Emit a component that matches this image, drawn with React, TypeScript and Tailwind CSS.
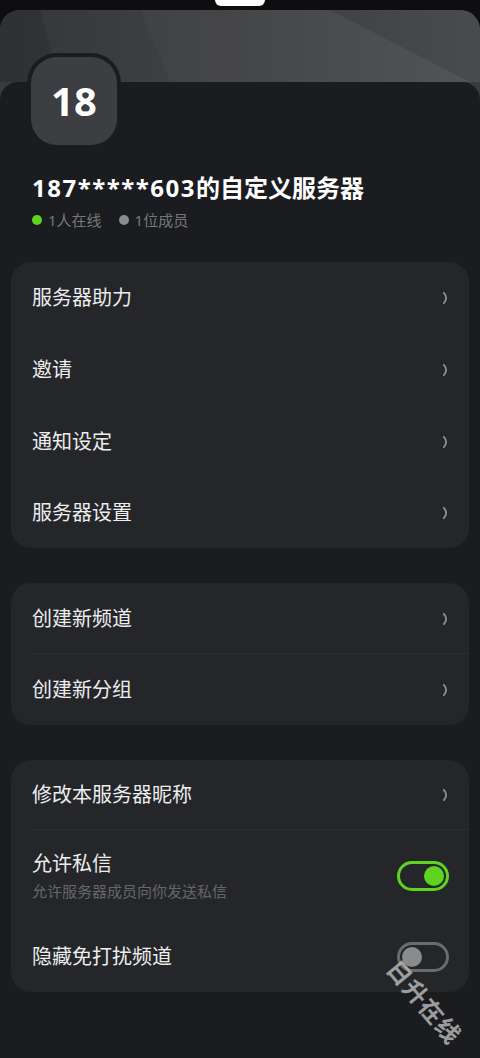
import React from "react";

const font = { fontFamily: '"Noto Sans", "Noto Sans CJK SC", sans-serif' };

function Chevron() {
  return (
    <svg width="8" height="14" viewBox="0 0 8 14" className="shrink-0">
      <path d="M1.8 1.8 Q6.5 7 1.8 12.2" fill="none" stroke="#8d8e91" strokeWidth="1.8" strokeLinecap="round" />
    </svg>
  );
}

function Row({ label, divider, h = "h-[72px]" }: { label: string; divider?: boolean; h?: string }) {
  return (
    <div className={`relative flex ${h} items-center justify-between pl-[21px] pr-[19px]`}>
      <span className="text-[20px] leading-none text-[#ecedef]">{label}</span>
      <Chevron />
      {divider && <div className="absolute bottom-0 left-[21px] right-0 h-px bg-[#2d2e32]" />}
    </div>
  );
}

function Toggle({ on }: { on: boolean }) {
  return on ? (
    <div className="flex h-[30px] w-[52px] items-center justify-end rounded-full border-[3px] border-[#5fd420] pr-[2px]">
      <div className="h-[20px] w-[20px] rounded-full bg-[#5fd420]" />
    </div>
  ) : (
    <div className="flex h-[30px] w-[52px] items-center justify-start rounded-full border-[3px] border-[#6a6b6d] pl-[2px]">
      <div className="h-[20px] w-[20px] rounded-full bg-[#8a8b8d]" />
    </div>
  );
}

export default function App() {
  return (
    <div className="relative h-[1058px] w-[480px] overflow-hidden bg-[#0e0e10]" style={font}>
      <div className="flex h-[10px] justify-center">
        <div className="h-[6px] w-[50px] rounded-b-full bg-white" />
      </div>
      <div className="relative h-[1048px] rounded-t-[20px] bg-[#3a3b3d] overflow-hidden">
        <div className="h-[72px] w-full bg-gradient-to-r from-[#2f3032] via-[#3c3d3f] to-[#4a4b4d] relative">
          <svg className="absolute inset-0" width="480" height="72" viewBox="0 0 480 72">
            <polygon points="40,0 140,0 170,72 60,72" fill="#ffffff" opacity="0.03" />
            <polygon points="140,0 330,0 470,72 170,72" fill="#ffffff" opacity="0.05" />
          </svg>
        </div>
        <div className="relative flex min-h-[976px] flex-col rounded-t-[18px] bg-[#1b1c1f] px-[11px]">
          <div className="absolute left-[27px] top-[-29px] rounded-[30px] bg-[#1b1c1f] p-[4px]">
            <div className="flex h-[88px] w-[86px] items-center justify-center rounded-[26px] bg-[#3d3e41]">
              <span className="text-[40px] font-bold leading-none text-white">18</span>
            </div>
          </div>
          <div className="pl-[21px] pt-[91px]">
            <div className="text-[24px] font-bold leading-[30px] text-white">
              <span className="tracking-[1.5px]">187*****603</span>的自定义服务器
            </div>
            <div className="mt-[7px] flex items-center text-[15px] leading-[20px] text-[#76777a]">
              <span className="mr-[6px] h-[10px] w-[10px] rounded-full bg-[#5fd420]" />
              <span>1人在线</span>
              <span className="ml-[17px] mr-[6px] h-[10px] w-[10px] rounded-full bg-[#8a8b8d]" />
              <span>1位成员</span>
            </div>
          </div>

          <div className="mt-[32px] rounded-[20px] bg-[#252629]">
            <Row label="服务器助力" />
            <Row label="邀请" />
            <Row label="通知设定" />
            <Row label="服务器设置" h="h-[70px]" />
          </div>

          <div className="mt-[35px] rounded-[20px] bg-[#252629]">
            <Row label="创建新频道" divider h="h-[71px]" />
            <Row label="创建新分组" h="h-[71px]" />
          </div>

          <div className="mt-[35px] rounded-[20px] bg-[#252629]">
            <Row label="修改本服务器昵称" divider h="h-[70px]" />
            <div className="flex h-[92px] items-center justify-between pl-[21px] pr-[20px]">
              <div className="flex flex-col">
                <span className="text-[20px] leading-[26px] text-[#ecedef]">允许私信</span>
                <span className="mt-[4px] text-[15px] leading-[20px] text-[#65666a]">允许服务器成员向你发送私信</span>
              </div>
              <Toggle on />
            </div>
            <div className="flex h-[70px] items-center justify-between pl-[21px] pr-[20px]">
              <span className="text-[20px] leading-none text-[#ecedef]">隐藏免打扰频道</span>
              <Toggle on={false} />
            </div>
          </div>
        </div>
      </div>
      <div
        className="absolute left-[374px] top-[990px] text-[24px] font-bold leading-none tracking-[1px] text-[#bdbdbd] opacity-80"
        style={{ transform: "rotate(50deg)", transformOrigin: "center" }}
      >
        日升在线
      </div>
    </div>
  );
}
